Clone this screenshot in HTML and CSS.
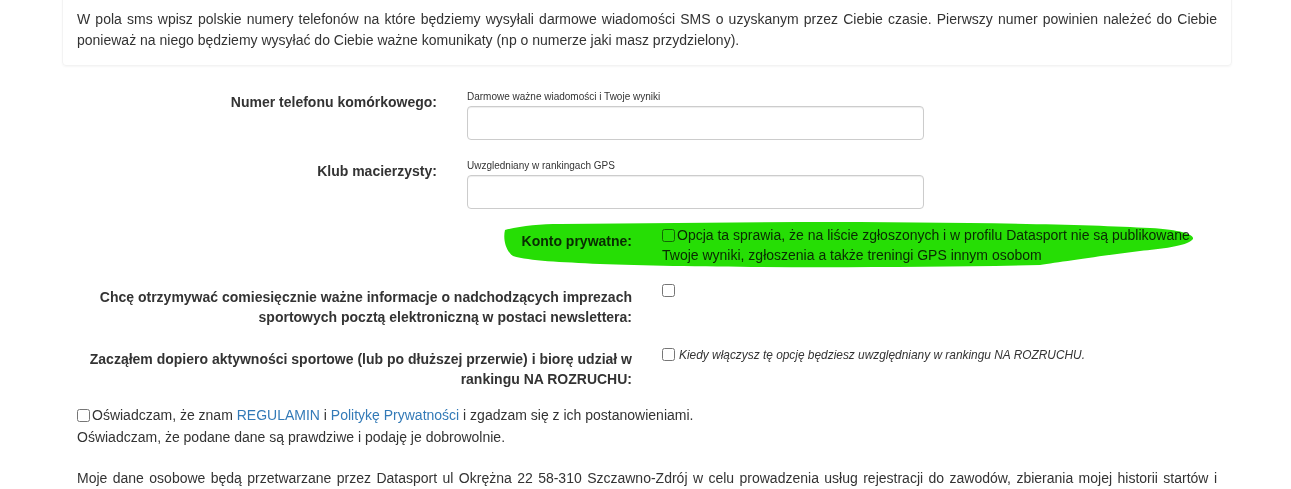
FILE: index.html
```html
<!DOCTYPE html>
<html lang="pl">
<head>
  <meta charset="UTF-8">
  <title>Rejestracja</title>
  <link rel="stylesheet" href="styles.css">
</head>
<body>
  <div class="container">
    <!-- Informacja o numerach SMS -->
    <div class="well">
      W pola sms wpisz polskie numery telefonów na które będziemy wysyłali darmowe wiadomości SMS o uzyskanym przez Ciebie czasie. Pierwszy numer powinien należeć do Ciebie ponieważ na niego będziemy wysyłać do Ciebie ważne komunikaty (np o numerze jaki masz przydzielony).
    </div>

    <form class="form-horizontal">
      <div class="form-group">
        <label class="control-label col-4" for="phone">Numer telefonu komórkowego:</label>
        <div class="col-5">
          <span class="hint">Darmowe ważne wiadomości i Twoje wyniki</span>
          <input class="form-control" type="text" id="phone">
        </div>
      </div>

      <div class="form-group">
        <label class="control-label col-4" for="club">Klub macierzysty:</label>
        <div class="col-5">
          <span class="hint">Uwzgledniany w rankingach GPS</span>
          <input class="form-control" type="text" id="club">
        </div>
      </div>

      <div class="form-group check-group private">
        <label class="control-label col-6">Konto prywatne:</label>
        <div class="col-6 check-col">
          <label><input type="checkbox">Opcja ta sprawia, że na liście zgłoszonych i w profilu Datasport nie są publikowane Twoje wyniki, zgłoszenia a także treningi GPS innym osobom</label>
        </div>
        <!-- zakreślenie markerem -->
        <svg class="marker" width="700" height="54" viewBox="0 0 700 54">
          <path d="M5,12 C20,8 40,6 60,6 L300,4 C450,4 580,6 650,10 C685,12 697,18 692,22 C687,28 660,31 640,33 C600,38 560,44 540,47 C400,50 200,50 100,46 C60,44 30,43 13,38 C5,32 3,20 5,12 Z" fill="#26de05"/>
        </svg>
      </div>

      <div class="form-group check-group">
        <label class="control-label col-6">Chcę otrzymywać comiesięcznie ważne informacje o nadchodzących imprezach sportowych pocztą elektroniczną w postaci newslettera:</label>
        <div class="col-6 check-col newsletter">
          <input type="checkbox">
        </div>
      </div>

      <div class="form-group check-group">
        <label class="control-label col-6">Zacząłem dopiero aktywności sportowe (lub po dłuższej przerwie) i biorę udział w rankingu NA ROZRUCHU:</label>
        <div class="col-6 check-col warmup">
          <label><input type="checkbox"><em>Kiedy włączysz tę opcję będziesz uwzględniany w rankingu NA ROZRUCHU.</em></label>
        </div>
      </div>

      <div class="agree">
        <label><input type="checkbox">Oświadczam, że znam <a href="#">REGULAMIN</a> i <a href="#">Politykę Prywatności</a> i zgadzam się z ich postanowieniami.</label><br>
        Oświadczam, że podane dane są prawdziwe i podaję je dobrowolnie.
      </div>

      <p class="rodo">Moje dane osobowe będą przetwarzane przez Datasport ul Okrężna 22 58-310 Szczawno-Zdrój w celu prowadzenia usług rejestracji do zawodów, zbierania mojej historii startów i prezentowania wyników zawodów oraz treningów zgodnie z regulaminem serwisu.</p>
    </form>
  </div>
</body>
</html>
```

FILE: styles.css
```css
body {
  font-family: 'Liberation Sans', Arial, sans-serif;
  font-size: 14px;
  line-height: 20px;
  color: #333;
  background-color: #fff;
  margin: 0;
  overflow: hidden;
}
.container {
  width: 1170px;
  margin: 0 0 0 62px;
  padding: 0 15px;
  box-sizing: border-box;
}
a {
  color: #337ab7;
  text-decoration: none;
}
.well {
  margin: -12px -15px 0;
  padding: 20px 14px 14px;
  line-height: 21px;
  text-align: justify;
  border: 1px solid #f3f3f3;
  border-radius: 4px;
  box-shadow: 0 1px 2px rgba(0, 0, 0, 0.04);
}
.form-horizontal {
  margin-top: 20px;
}
.form-group {
  display: flex;
  margin: 0 -15px 15px;
}
.col-4, .col-5, .col-6 {
  padding: 0 15px;
  box-sizing: border-box;
}
.col-4 { width: 33.3333%; }
.col-5 { width: 41.6667%; }
.col-6 { width: 50%; }
.control-label {
  text-align: right;
  font-weight: bold;
  padding-top: 6px;
}
.hint {
  display: block;
  font-size: 10px;
  line-height: 13px;
  margin: 4px 0 3px;
}
.form-control {
  display: block;
  width: 100%;
  height: 34px;
  padding: 6px 12px;
  box-sizing: border-box;
  font: inherit;
  color: #555;
  background-color: #fff;
  border: 1px solid #ccc;
  border-radius: 4px;
  box-shadow: inset 0 1px 1px rgba(0, 0, 0, 0.075);
}
.check-group .control-label {
  padding-top: 7px;
}
.check-col {
  padding-top: 1px;
}
.check-col label {
  font-weight: normal;
}
input[type="checkbox"] {
  width: 13px;
  height: 13px;
  margin: 0 2px 0 0;
  vertical-align: -2px;
}
.newsletter {
  padding-top: 4px;
}
.newsletter input[type="checkbox"] {
  vertical-align: top;
}
.warmup {
  padding-top: 2px;
}
.warmup em {
  font-size: 11.9px;
  margin-left: 2px;
}
.private {
  position: relative;
}
.marker {
  position: absolute;
  left: 438px;
  top: -6px;
  mix-blend-mode: multiply;
  pointer-events: none;
}
.agree {
  line-height: 22px;
}
.rodo {
  margin: 20px 0 0;
  text-align: justify;
}
```
